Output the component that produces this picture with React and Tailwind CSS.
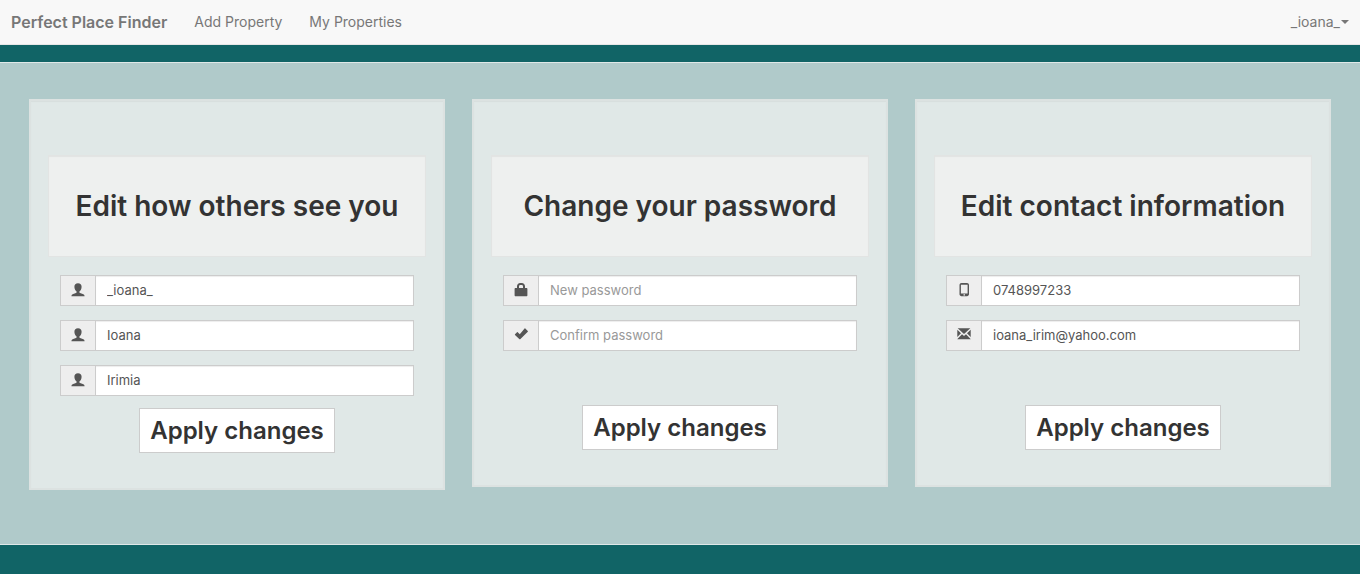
import React from "react";

function UserIcon() {
  return (
    <svg viewBox="0 0 14 14" className="size-[14px]" fill="currentColor" aria-hidden="true">
      <path d="M7 .2C4.700.2 3.400 1.700 3.400 3.700c0 1.100.2 2.200.7 3.100.4.8.9 1.300 1.500 1.700v.8c0 .4-.3.600-.7.800L1.600 11.300C.8 11.700.4 12.300.4 13.200h13.200c0-.9-.4-1.500-1.200-1.900L9.100 10.100c-.4-.2-.7-.4-.7-.8v-.8c.6-.4 1.100-.9 1.500-1.700.5-.9.7-2 .7-3.100C10.600 1.700 9.300.2 7 .2Z" />
    </svg>
  );
}

function LockIcon() {
  return (
    <svg viewBox="0 0 14 14" className="size-[14px]" fill="currentColor" aria-hidden="true">
      <path
        fillRule="evenodd"
        d="M3 5V3.200C3 1.400 4.400 0 6.200 0h1.600C9.600 0 11 1.400 11 3.200V5h1.400c.6 0 1 .4 1 1v6.300c0 .6-.4 1-1 1H1.600c-.6 0-1-.4-1-1V6c0-.6.4-1 1-1H3Zm2 0h4V3.500C9 2.600 8.500 2 7.700 2H6.300C5.500 2 5 2.600 5 3.500V5Z"
      />
    </svg>
  );
}

function CheckIcon() {
  return (
    <svg viewBox="0 1 14 14" className="size-[14px]" fill="currentColor" aria-hidden="true">
      <path d="M11.300 1.500 13.800 4c.2.200.2.500 0 .7L6.200 12.200c-.2.200-.5.200-.7 0L1 7.900c-.2-.2-.2-.5 0-.7l2-2c.2-.2.500-.2.700 0l2.100 2.100 4.800-5.800c.2-.2.500-.2.700 0Z" />
    </svg>
  );
}

function PhoneIcon() {
  return (
    <svg viewBox="0 0 14 14" className="size-[14px]" fill="currentColor" aria-hidden="true">
      <path
        fillRule="evenodd"
        d="M4.500 0h5.500C11.100 0 12 .8 12 1.900v9.400c0 1.100-.9 1.900-2 1.900H4.500c-1.100 0-2-.8-2-1.900V1.900C2.500.8 3.400 0 4.500 0ZM3.900 1.700V10.500h6.700V1.700H3.900Zm2.600 9.600v1.100H8v-1.100H6.500Z"
      />
    </svg>
  );
}

function EnvelopeIcon() {
  return (
    <svg viewBox="0 1 14 14" className="size-[14px]" fill="currentColor" aria-hidden="true">
      <path d="M.7 1.300h12.600L7 7 .7 1.300ZM.3 2.700l3.700 3.600L.3 10V2.700Zm13.400 0V10L10 6.300l3.700-3.600ZM5 7.200l2 1.700 2-1.700 4.600 4.700v.4H.4v-.4L5 7.200Z" />
    </svg>
  );
}

function Field({ id, label, icon, ...input }) {
  return (
    <div className="flex h-[31px]">
      <label
        htmlFor={id}
        className="flex w-9 shrink-0 items-start justify-center border border-[#ccc] bg-[#eee] pt-[7px] text-[#555]"
      >
        {icon}
      </label>
      <input
        id={id}
        aria-label={label}
        className="w-full min-w-0 border border-l-0 border-[#ccc] bg-white px-[11px] text-[13px] text-[#555] shadow-[inset_0_1px_1px_rgba(0,0,0,0.075)] outline-none placeholder:text-[#999] focus:border-[#66afe9]"
        {...input}
      />
    </div>
  );
}

function Card({ title, spaced, children }) {
  return (
    <section className="border-2 border-[#dce2e1] bg-[#e0e8e7] px-[17px] pt-[54px] pb-[35px] shadow-[inset_0_1px_1px_rgba(0,0,0,0.04)]">
      <div className="flex h-[102px] items-center justify-center border border-[#e2e4e3] bg-[#eef0ef] shadow-[inset_0_1px_1px_rgba(0,0,0,0.05)]">
        <h2 className="text-center text-[28px] leading-8 font-semibold text-[#333]">{title}</h2>
      </div>
      <form className="px-3 pt-[18px]" onSubmit={(event) => event.preventDefault()}>
        <div className="flex flex-col gap-[14px]">{children}</div>
        <div className={spaced ? "flex justify-center pt-[54px]" : "flex justify-center pt-3"}>
          <button
            type="submit"
            className="h-[45px] border border-[#ccc] bg-white px-[10px] text-2xl leading-7 font-semibold text-[#333] hover:bg-[#e6e6e6]"
          >
            Apply changes
          </button>
        </div>
      </form>
    </section>
  );
}

export default function App() {
  return (
    <div className="min-h-screen bg-[#116466] font-['Inter',sans-serif]">
      <nav className="flex h-[45px] items-center justify-between border-b border-[#e7e7e7] bg-[#f8f8f8] px-[11px] text-sm text-[#777]">
        <div className="flex items-center gap-[27px]">
          <a href="#home" className="text-base font-semibold">
            Perfect Place Finder
          </a>
          <a href="#add">Add Property</a>
          <a href="#properties">My Properties</a>
        </div>
        <button type="button" className="flex items-center gap-px">
          _ioana_
          <svg viewBox="0 0 8 4" className="h-1 w-2" fill="currentColor" aria-hidden="true">
            <path d="M0 0h8L4 4Z" />
          </svg>
        </button>
      </nav>

      <main className="mt-[17px] border-y border-[#dfe8e8] bg-[#b0caca] px-[29px] pt-9 pb-[54px]">
        <div className="grid grid-cols-3 items-start gap-[27px]">
          <Card title="Edit how others see you">
            <Field id="username" label="Username" icon={<UserIcon />} type="text" defaultValue="_ioana_" />
            <Field id="first-name" label="First name" icon={<UserIcon />} type="text" defaultValue="Ioana" />
            <Field id="last-name" label="Last name" icon={<UserIcon />} type="text" defaultValue="Irimia" />
          </Card>
          <Card title="Change your password" spaced>
            <Field id="new-password" label="New password" icon={<LockIcon />} type="password" placeholder="New password" />
            <Field id="confirm-password" label="Confirm password" icon={<CheckIcon />} type="password" placeholder="Confirm password" />
          </Card>
          <Card title="Edit contact information" spaced>
            <Field id="phone" label="Phone number" icon={<PhoneIcon />} type="tel" defaultValue="0748997233" />
            <Field id="email" label="Email address" icon={<EnvelopeIcon />} type="email" defaultValue="ioana_irim@yahoo.com" />
          </Card>
        </div>
      </main>
    </div>
  );
}
